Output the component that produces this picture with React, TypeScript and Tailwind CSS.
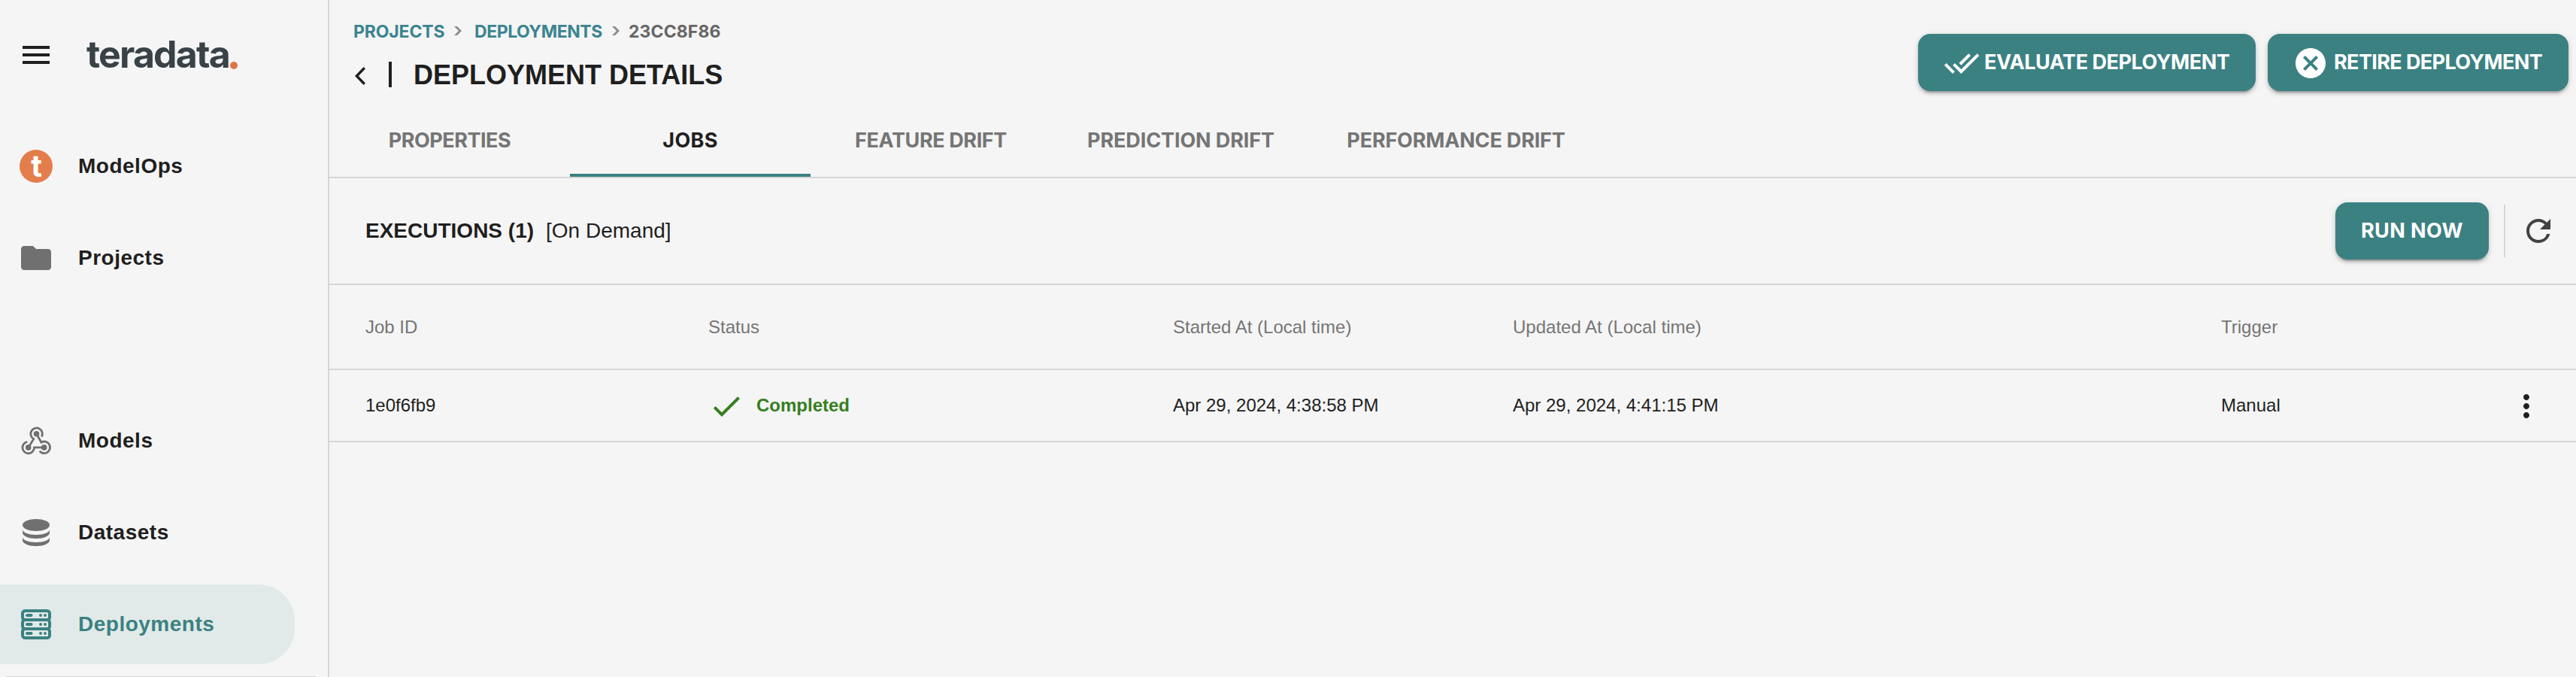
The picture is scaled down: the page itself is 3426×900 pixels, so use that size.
import type { ReactNode } from "react";

const RAISED =
  "shadow-[0_6px_2px_-4px_rgba(0,0,0,0.2),0_4px_4px_0_rgba(0,0,0,0.14),0_2px_10px_0_rgba(0,0,0,0.12)]";

function Icon({ d, className = "" }: { d: string; className?: string }) {
  return (
    <svg viewBox="0 0 24 24" className={`size-12 shrink-0 fill-current ${className}`}>
      <path d={d} />
    </svg>
  );
}

function ModelOpsIcon() {
  return (
    <svg viewBox="0 0 48 48" className="size-12 shrink-0">
      <circle cx="24" cy="24" r="22" fill="#e37e4c" />
      <text x="24.5" y="38" textAnchor="middle" fontFamily="Inter, sans-serif" fontWeight="700" fontSize="40" fill="#fff">
        t
      </text>
    </svg>
  );
}

function ModelsIcon() {
  return (
    <svg viewBox="24 562 48 48" className="size-12 shrink-0 text-[#707070]">
      <g fill="none" stroke="currentColor" strokeWidth="2.8">
        <path d="M55.4 580.6A7.8 7.8 0 1 0 44.8 583.6L37.7 595" />
        <path d="M48.5 576.7L54.9 588A7.8 7.8 0 1 1 52.6 599.6" />
        <path d="M58.7 594.9H45.5A7.8 7.8 0 1 1 36.3 587.3" />
      </g>
      <g fill="currentColor">
        <circle cx="48.5" cy="576.7" r="3.8" />
        <circle cx="37.7" cy="594.9" r="3.8" />
        <circle cx="58.7" cy="594.9" r="3.8" />
      </g>
    </svg>
  );
}

function DatasetsIcon() {
  return (
    <svg viewBox="0 0 48 48" className="size-12 shrink-0 fill-[#707070]">
      <ellipse cx="24" cy="14" rx="18" ry="8" />
      <path d="M6 20c0 4 8 7 18 7s18-3 18-7v4c0 4.500-8 8-18 8s-18-3.500-18-8z" />
      <path d="M6 30c0 4 8 7 18 7s18-3 18-7v4c0 4.500-8 8-18 8s-18-3.500-18-8z" />
    </svg>
  );
}

function DeploymentsIcon() {
  return (
    <svg viewBox="0 0 48 48" className="size-12 shrink-0 text-[#3b8182]">
      {[0, 12, 24].map((y) => (
        <g key={y} transform={`translate(0 ${y})`}>
          <rect x="6" y="6" width="36" height="12" rx="3.500" fill="none" stroke="currentColor" strokeWidth="4" />
          <rect x="10" y="10" width="9.500" height="4" rx="2" fill="currentColor" />
          <circle cx="30" cy="12" r="2" fill="currentColor" />
          <circle cx="36" cy="12" r="2" fill="currentColor" />
        </g>
      ))}
    </svg>
  );
}

function NavItem({ icon, label, active = false }: { icon: ReactNode; label: string; active?: boolean }) {
  return (
    <a
      className={`flex h-[106px] w-[392px] shrink-0 items-center gap-8 rounded-r-[48px] pl-6 ${
        active ? "bg-[#e1eae8] text-[#3b8182]" : "text-[#1f1f1f]"
      }`}
    >
      {icon}
      <span className="mb-px text-[28px] leading-[31px] font-bold tracking-[0.5px]">{label}</span>
    </a>
  );
}

function Sidebar() {
  return (
    <aside className="flex h-[900px] w-[438px] shrink-0 flex-col overflow-hidden border-r-2 border-[#d6d6d6]">
      <div className="flex h-[168px] shrink-0 items-start pl-6">
        <Icon d="M3 18h18v-2H3v2zm0-5h18v-2H3v2zm0-7v2h18V6H3z" className="mt-[49px] text-[#1f1f1f]" />
        <div className="mt-[42px] ml-[43px] flex">
          <span className="w-[191px] font-['Inter',sans-serif] text-[50px] leading-[60px] font-bold tracking-[-1.8px] text-[#394246]">
            teradata
          </span>
          <span className="mt-[39.5px] size-[10px] rounded-full bg-[#de7549]" />
        </div>
      </div>
      <nav className="flex flex-col gap-4">
        <NavItem icon={<ModelOpsIcon />} label="ModelOps" />
        <NavItem
          icon={
            <Icon
              d="M10 4H4c-1.100 0-1.990.900-1.990 2L2 18c0 1.100.900 2 2 2h16c1.100 0 2-.900 2-2V8c0-1.100-.900-2-2-2h-8l-2-2z"
              className="text-[#707070]"
            />
          }
          label="Projects"
        />
      </nav>
      <nav className="mt-[137px] flex flex-col gap-4">
        <NavItem icon={<ModelsIcon />} label="Models" />
        <NavItem icon={<DatasetsIcon />} label="Datasets" />
        <NavItem icon={<DeploymentsIcon />} label="Deployments" active />
      </nav>
      <div className="mt-4 ml-2 h-[2px] w-[412px] shrink-0 bg-[#d6d6d6]" />
    </aside>
  );
}

function Crumb() {
  return (
    <svg viewBox="0 0 10 12" className="mt-[10px] h-3 w-[10px] shrink-0">
      <path d="M0 0h4l6 6-6 6H0l6-6z" fill="#8c8c8c" />
    </svg>
  );
}

const TABS = [
  { label: "PROPERTIES", box: "w-[320px]", track: "tracking-[-0.5px]" },
  { label: "JOBS", box: "w-[320px]", track: "tracking-[0.3px]", active: true },
  { label: "FEATURE DRIFT", box: "w-[320px]", track: "tracking-[-0.4px]" },
  { label: "PREDICTION DRIFT", box: "w-[345px]", track: "tracking-[-0.12px]" },
  { label: "PERFORMANCE DRIFT", box: "w-[387px]", track: "tracking-[-0.18px]" },
];

function Header() {
  return (
    <header className="flex h-[237px] flex-col border-b-2 border-[#d6d6d6] font-['Inter',sans-serif] font-bold">
      <div className="flex h-[143px] justify-between pl-8">
        <div className="flex flex-col pt-[25px]">
          <div className="flex text-[23px] leading-[34px] text-[#3b8490]">
            <span className="w-[134px] tracking-[-0.15px]">PROJECTS</span>
            <Crumb />
            <span className="ml-[17px] w-[183px] tracking-[-0.44px]">DEPLOYMENTS</span>
            <Crumb />
            <span className="ml-[12px] tracking-[0.1px] text-[#666]">23CC8F86</span>
          </div>
          <div className="mt-[18px] flex text-[#1f1f1f]">
            <svg viewBox="0 0 14 24" className="mt-3 ml-[2px] h-6 w-[14px]">
              <path d="M12.800 1.300L2.400 12l10.400 10.700" fill="none" stroke="currentColor" strokeWidth="3.400" />
            </svg>
            <span className="mt-[5px] ml-[31px] h-[34px] w-1 bg-[#1f1f1f]" />
            <h1 className="ml-[29px] font-['Liberation_Sans',Arial,sans-serif] text-[36px] leading-[45px] font-bold">
              DEPLOYMENT DETAILS
            </h1>
          </div>
        </div>
        <div className="flex gap-4 pt-[45px] pr-[10px] text-[27px] leading-[41px] text-white">
          <button className={`flex h-[76px] w-[449px] items-center rounded-2xl bg-[#3b8182] pl-[34px] ${RAISED}`}>
            <Icon
              d="M18 7l-1.410-1.410-6.340 6.340 1.410 1.410L18 7zm4.240-1.410L11.660 16.170 7.480 12l-1.410 1.410L11.660 19l12-12-1.420-1.410zM.410 13.410L6 19l1.410-1.410L1.830 12 .410 13.410z"
              className="mt-[2px]"
            />
            <span className="mb-px ml-[6px] tracking-[-0.46px] whitespace-nowrap">EVALUATE DEPLOYMENT</span>
          </button>
          <button className={`flex h-[76px] w-[400px] items-center rounded-2xl bg-[#3b8182] pl-[33px] ${RAISED}`}>
            <Icon
              d="M12 2C6.470 2 2 6.470 2 12s4.470 10 10 10 10-4.470 10-10S17.530 2 12 2zm5 13.590L15.590 17 12 13.410 8.410 17 7 15.590 10.590 12 7 8.410 8.410 7 12 10.590 15.590 7 17 8.410 13.410 12 17 15.590z"
              className="mt-[2px]"
            />
            <span className="mb-px ml-[7px] tracking-[-0.62px] whitespace-nowrap">RETIRE DEPLOYMENT</span>
          </button>
        </div>
      </div>
      <div className="flex h-[92px] text-[27px] leading-[41px]">
        {TABS.map((t) => (
          <div
            key={t.label}
            className={`flex h-full justify-center border-b-4 pt-[23px] whitespace-nowrap ${t.box} ${t.track} ${
              t.active ? "border-[#3b8182] text-[#1f1f1f]" : "border-transparent text-[#757575]"
            }`}
          >
            {t.label}
          </div>
        ))}
      </div>
    </header>
  );
}

const COLS = "grid grid-cols-[456px_618px_452px_942px_1fr] items-center pl-12";

export default function App() {
  return (
    <div className="flex h-[900px] w-full overflow-hidden bg-[#f5f5f5] font-['Liberation_Sans',Arial,sans-serif] text-[#1f1f1f]">
      <Sidebar />
      <main className="min-w-0 grow">
        <Header />
        <section className="flex h-[142px] items-center border-b-2 border-[#d6d6d6] pr-[26px] pl-12">
          <h2 className="mb-px text-[28px] leading-[31px] font-bold">EXECUTIONS (1)</h2>
          <span className="mb-px ml-4 text-[28px] leading-[31px]">[On Demand]</span>
          <button
            className={`ml-auto flex h-[76px] w-[204px] items-center justify-center rounded-2xl bg-[#3b8182] font-['Inter',sans-serif] text-[27px] leading-[41px] font-bold text-white ${RAISED}`}
          >
            <span className="mb-px tracking-[0.4px]">RUN NOW</span>
          </button>
          <span className="mx-5 h-[70px] w-[2px] bg-[#d6d6d6]" />
          <Icon
            d="M17.650 6.350A7.958 7.958 0 0 0 12 4c-4.420 0-7.990 3.580-7.990 8s3.570 8 7.990 8c3.730 0 6.840-2.550 7.730-6h-2.080A5.990 5.990 0 0 1 12 18c-3.310 0-6-2.690-6-6s2.690-6 6-6c1.660 0 3.140.690 4.220 1.780L13 11h7V4l-2.350 2.350z"
            className="text-[#424242]"
          />
        </section>
        <div className={`${COLS} h-[113px] border-b-2 border-[#d6d6d6] text-[24px] leading-[27px] text-[#757575]`}>
          <span>Job ID</span>
          <span>Status</span>
          <span>Started At (Local time)</span>
          <span>Updated At (Local time)</span>
          <span>Trigger</span>
        </div>
        <div className={`${COLS} h-[96px] border-b-2 border-[#d6d6d6] pb-px text-[24px] leading-[27px]`}>
          <span>1e0f6fb9</span>
          <span className="flex items-center gap-4 font-bold text-[#357f1e]">
            <Icon d="M9 16.170L4.830 12l-1.420 1.410L9 19 21 7l-1.410-1.410z" className="mt-[3px]" />
            Completed
          </span>
          <span>Apr 29, 2024, 4:38:58 PM</span>
          <span>Apr 29, 2024, 4:41:15 PM</span>
          <span className="flex items-center justify-between pr-[42px]">
            Manual
            <Icon
              d="M12 8c1.100 0 2-.900 2-2s-.900-2-2-2-2 .900-2 2 .900 2 2 2zm0 2c-1.100 0-2 .900-2 2s.900 2 2 2 2-.900 2-2-.900-2-2-2zm0 6c-1.100 0-2 .900-2 2s.900 2 2 2 2-.900 2-2-.900-2-2-2z"
              className="mt-[3px]"
            />
          </span>
        </div>
      </main>
    </div>
  );
}
